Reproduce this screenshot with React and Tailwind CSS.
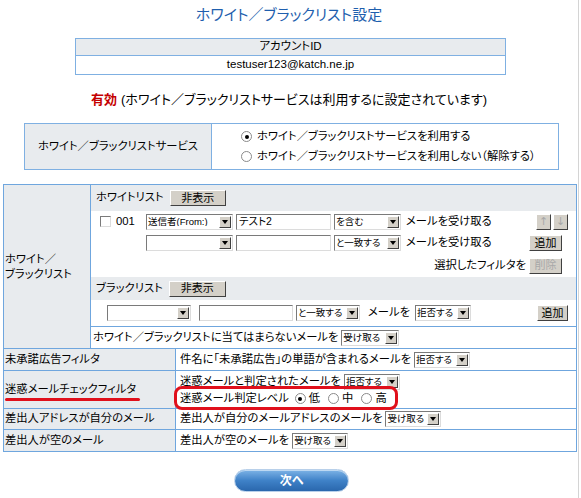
import React from 'react';

const font = "font-['Liberation_Sans','Noto_Sans_CJK_JP',sans-serif] [font-feature-settings:'palt']";

function Arrow() {
  return (
    <span className="ml-auto flex h-[12px] w-[12px] shrink-0 items-center justify-center border border-t-white border-l-white border-b-[#404040] border-r-[#404040] bg-[#d4d0c8]">
      <svg width="6" height="4" viewBox="0 0 6 4">
        <path d="M0 0h6L3 4z" fill="#000" />
      </svg>
    </span>
  );
}

function Sel({ w, children }) {
  return (
    <span className={`flex h-[16px] shrink-0 items-center border border-t-[#7a7a7a] border-l-[#7a7a7a] border-b-[#dcdcdc] border-r-[#dcdcdc] bg-white pl-[1px] pr-[1px] text-[9.5px] leading-none ${w}`}>
      <span className="overflow-hidden whitespace-nowrap pr-[1px]">{children}</span>
      <Arrow />
    </span>
  );
}

function Input({ w, children }) {
  return (
    <span className={`flex h-[16px] shrink-0 items-center border border-t-[#7a7a7a] border-l-[#7a7a7a] border-b-[#dcdcdc] border-r-[#dcdcdc] bg-white pl-[2px] text-[10.5px] leading-none ${w}`}>
      {children}
    </span>
  );
}

function Btn({ w, off, children }) {
  return (
    <span
      className={`flex h-[16px] shrink-0 items-center justify-center border border-t-white border-l-white border-b-[#404040] border-r-[#404040] bg-[#d4d0c8] text-[11px] leading-none ${w} ${
        off ? 'text-[#a8a8a8]' : 'text-black'
      }`}
    >
      {children}
    </span>
  );
}

function Radio({ on }) {
  return (
    <span className="inline-flex h-[11px] w-[11px] shrink-0 items-center justify-center rounded-full border border-[#8a8a8a] bg-white">
      {on && <span className="h-[4px] w-[4px] rounded-full bg-black" />}
    </span>
  );
}

function Check() {
  return <span className="h-[11px] w-[11px] shrink-0 border border-t-[#7a7a7a] border-l-[#7a7a7a] border-b-[#dcdcdc] border-r-[#dcdcdc] bg-white" />;
}

function Row({ label, children, h }) {
  return (
    <div className={`flex ${h}`}>
      <div className="flex w-[172px] shrink-0 items-center border-r border-[#6fa6de] bg-[#e8ebee] pl-[1px]">{label}</div>
      <div className="flex flex-1 items-center gap-[3px] pl-[4px]">{children}</div>
    </div>
  );
}

export default function App() {
  return (
    <div className={`min-h-[498px] w-[579px] border-r border-[#d4d4d4] bg-white text-[11.3px] leading-none text-black ${font}`}>
      <div className="flex h-[28px] items-center justify-center text-[15px] text-[#1f5fae]">
        ホワイト／ブラックリスト設定
      </div>

      <div className="ml-[75px] mt-[10px] w-[431px] border border-[#7fb0e2] text-[11.5px]">
        <div className="flex h-[17px] items-center justify-center border-b border-[#7fb0e2] bg-[#e8ebee]">アカウントID</div>
        <div className="flex h-[18px] items-center justify-center">testuser123@katch.ne.jp</div>
      </div>

      <div className="flex h-[48px] items-center justify-center text-[13px]">
        <span className="font-bold text-[#c40000]">有効</span>
        <span className="ml-[4px]">(ホワイト／ブラックリストサービスは利用するに設定されています)</span>
      </div>

      <div className="ml-[24px] flex h-[47px] w-[535px] border border-[#7fb0e2]">
        <div className="flex w-[187px] items-center justify-center border-r border-[#7fb0e2] bg-[#e8ebee]">
          ホワイト／ブラックリストサービス
        </div>
        <div className="flex flex-1 flex-col justify-center pl-[29px]">
          <div className="flex h-[20px] items-center gap-[5px]">
            <Radio on />
            <span>ホワイト／ブラックリストサービスを利用する</span>
          </div>
          <div className="flex h-[20px] items-center gap-[5px]">
            <Radio />
            <span>ホワイト／ブラックリストサービスを利用しない（解除する）</span>
          </div>
        </div>
      </div>

      <div className="ml-[3px] mt-[14px] flex w-[574px] flex-col divide-y divide-[#6fa6de] border border-[#6fa6de]">
        <div className="flex">
          <div className="flex w-[87px] shrink-0 items-center border-r border-[#6fa6de] bg-[#e8ebee] pl-[1px] leading-[15px]">
            ホワイト／
            <br />
            ブラックリスト
          </div>
          <div className="flex flex-1 flex-col">
            <div className="flex h-[26px] items-center bg-[#e8ebee] pl-[5px]">
              <span>ホワイトリスト</span>
              <span className="ml-[6px]">
                <Btn w="w-[56px]">非表示</Btn>
              </span>
            </div>
            <div className="flex h-[21px] items-center pl-[9px]">
              <Check />
              <span className="ml-[5px] w-[30px]">001</span>
              <Sel w="w-[87px]">送信者(From:)</Sel>
              <span className="ml-[3px]">
                <Input w="w-[95px]">テスト2</Input>
              </span>
              <span className="ml-[3px]">
                <Sel w="w-[67px]">を含む</Sel>
              </span>
              <span className="ml-[5px]">メールを受け取る</span>
              <span className="ml-auto mr-[8px] flex gap-[2px] font-['DejaVu_Sans',sans-serif]">
                <Btn w="w-[15px]" off>↑</Btn>
                <Btn w="w-[15px]" off>↓</Btn>
              </span>
            </div>
            <div className="flex h-[22px] items-center pl-[55px]">
              <Sel w="w-[87px]" />
              <span className="ml-[3px]">
                <Input w="w-[95px]" />
              </span>
              <span className="ml-[3px]">
                <Sel w="w-[67px]">と一致する</Sel>
              </span>
              <span className="ml-[5px]">メールを受け取る</span>
              <span className="ml-auto mr-[14px]">
                <Btn w="w-[33px]">追加</Btn>
              </span>
            </div>
            <div className="flex h-[23px] items-center justify-end pr-[14px]">
              <span className="mr-[3px]">選択したフィルタを</span>
              <Btn w="w-[33px]" off>削除</Btn>
            </div>
            <div className="flex h-[23px] items-center bg-[#e8ebee] pl-[5px]">
              <span>ブラックリスト</span>
              <span className="ml-[6px]">
                <Btn w="w-[57px]">非表示</Btn>
              </span>
            </div>
            <div className="flex h-[26px] items-center pl-[16px]">
              <Sel w="w-[84px]" />
              <span className="ml-[8px]">
                <Input w="w-[94px]" />
              </span>
              <span className="ml-[3px]">
                <Sel w="w-[64px]">と一致する</Sel>
              </span>
              <span className="ml-[8px]">メールを</span>
              <span className="ml-[5px]">
                <Sel w="w-[56px]">拒否する</Sel>
              </span>
              <span className="ml-auto mr-[8px]">
                <Btn w="w-[31px]">追加</Btn>
              </span>
            </div>
            <div className="flex h-[22px] items-center border-t border-[#6fa6de] pl-[2px]">
              <span>ホワイト／ブラックリストに当てはまらないメールを</span>
              <span className="ml-[3px]">
                <Sel w="w-[58px]">受け取る</Sel>
              </span>
            </div>
          </div>
        </div>

        <Row h="h-[22px]" label="未承諾広告フィルタ">
          <span>件名に「未承諾広告」の単語が含まれるメールを</span>
          <Sel w="w-[56px]">拒否する</Sel>
        </Row>

        <div className="flex h-[38px]">
          <div className="flex w-[172px] shrink-0 items-center border-r border-[#6fa6de] bg-[#e8ebee] pl-[1px]">
            <span className="relative">
              迷惑メールチェックフィルタ
              <span className="absolute left-[0px] top-[14px] h-[3px] w-[135px] rounded-full bg-[#e0101c]" />
            </span>
          </div>
          <div className="relative flex flex-1 flex-col justify-center pl-[4px] pt-[2px]">
            <div className="flex h-[17px] items-center gap-[3px]">
              <span>迷惑メールと判定されたメールを</span>
              <Sel w="w-[56px]">拒否する</Sel>
            </div>
            <div className="flex h-[17px] items-center">
              <span>迷惑メール判定レベル</span>
              <span className="ml-[6px] flex items-center gap-[3px]">
                <Radio on />
                <span>低</span>
              </span>
              <span className="ml-[8px] flex items-center gap-[3px]">
                <Radio />
                <span>中</span>
              </span>
              <span className="ml-[8px] flex items-center gap-[3px]">
                <Radio />
                <span>高</span>
              </span>
            </div>
            <span className="absolute left-[-2px] top-[15px] h-[24px] w-[224px] rounded-[8px] border-[3px] border-[#e0101c]" />
          </div>
        </div>

        <Row h="h-[21px]" label="差出人アドレスが自分のメール">
          <span>差出人が自分のメールアドレスのメールを</span>
          <Sel w="w-[56px]">受け取る</Sel>
        </Row>

        <Row h="h-[21px]" label="差出人が空のメール">
          <span>差出人が空のメールを</span>
          <Sel w="w-[56px]">受け取る</Sel>
        </Row>
      </div>

      <div className="ml-[234px] mt-[17px] flex h-[23px] w-[115px] items-center justify-center rounded-full border border-[#b8d0ea] bg-gradient-to-b from-[#7db3e6] via-[#3f82c8] to-[#2a67ad] text-[12px] font-bold text-white shadow-[inset_0_1px_0_rgba(255,255,255,0.5)]">
        次へ
      </div>
    </div>
  );
}
